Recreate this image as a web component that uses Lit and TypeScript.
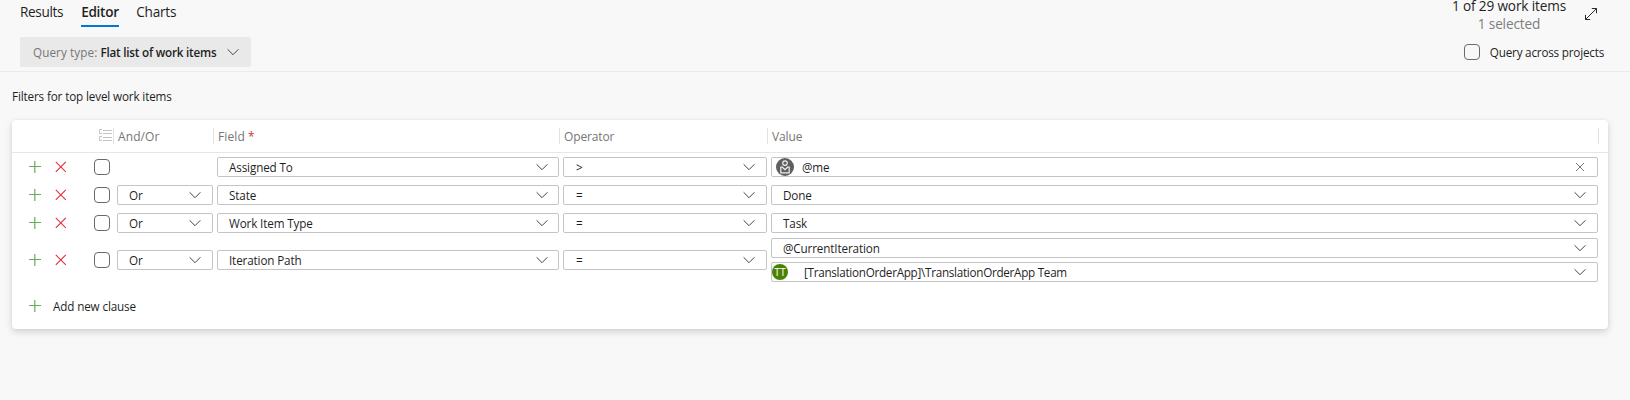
import { LitElement, html, css } from "lit";

const chevron = html`<svg class="chev" width="12" height="12" viewBox="0 0 12 12"><path d="M.6 3.3 6 8.7l5.4-5.4" /></svg>`;
const plus = html`<svg class="plus" width="12" height="12" viewBox="0 0 12 12"><path d="M5.8 0v12M0 5.5h12" /></svg>`;
const cross = html`<svg class="cross" width="12" height="12" viewBox="0 0 12 12"><path d="M.8.8l10 10M10.8.8l-10 10" /></svg>`;
const clearIcon = html`<svg class="clear" width="12" height="12" viewBox="0 0 12 12"><path d="M2 2l8 8M10 2l-8 8" /></svg>`;
const person = html`<svg class="person" width="18" height="18" viewBox="0 0 18 18">
  <circle cx="9" cy="9" r="9" fill="#5f5f5f" />
  <circle cx="9" cy="5.1" r="2.3" fill="none" stroke="#eee" stroke-width="1.2" />
  <path d="M4.8 9.2h1.6L9 11.6l2.6-2.4h1.6v5.6H4.8z" fill="none" stroke="#eee" stroke-width="1.2" />
</svg>`;

interface Value {
  text: string;
  kind?: "identity" | "team";
}

interface Clause {
  andOr?: string;
  field: string;
  op: string;
  values: Value[];
}

const clauses: Clause[] = [
  { field: "Assigned To", op: ">", values: [{ text: "@me", kind: "identity" }] },
  { andOr: "Or", field: "State", op: "=", values: [{ text: "Done" }] },
  { andOr: "Or", field: "Work Item Type", op: "=", values: [{ text: "Task" }] },
  {
    andOr: "Or",
    field: "Iteration Path",
    op: "=",
    values: [{ text: "@CurrentIteration" }, { text: "[TranslationOrderApp]\\TranslationOrderApp Team", kind: "team" }],
  },
];

class AppRoot extends LitElement {
  static styles = css`
    :host { display: block; height: 400px; overflow: hidden; background: #f8f8f8; color: #1f1f1f;
      font: 11.7px/20px "Open Sans", "Noto Sans", sans-serif; letter-spacing: -0.14px; }
    * { box-sizing: border-box; }
    svg { display: block; flex: none; fill: none; }
    .top { display: flex; justify-content: space-between; height: 72px; border-bottom: 1px solid #eaeaea; padding: 0 26px 0 20px; }
    .tabs { display: flex; gap: 18px; height: 27px; font-size: 13.6px; }
    .tab { height: 27px; line-height: 24px; border-bottom: 2px solid transparent; letter-spacing: -0.35px; }
    .tab.active { font-weight: 600; width: 38px; border-color: #0078d4; letter-spacing: -0.3px; }
    .tab.last { letter-spacing: -0.2px; margin-left: -1px; }
    .pill { display: flex; align-items: center; width: 231px; height: 30px; margin-top: 10px; padding: 0 12px 1px 13px; border-radius: 2px; background: #e9e9e9; }
    .pill .label { color: #767676; letter-spacing: 0.1px; margin-right: 3px; }
    .pill .val { font-weight: 600; flex: 1; letter-spacing: -0.22px; }
    .right { display: flex; flex-direction: column; align-items: flex-end; }
    .counts { display: flex; gap: 19px; height: 44px; padding-right: 7px; }
    .lines { text-align: center; font-size: 13.6px; line-height: 19px; }
    .lines .total { height: 15px; line-height: 11px; }
    .lines .sel { color: #7d7d7d; height: 19px; line-height: 18px; }
    .expand { margin-top: 8px; stroke: #2b2b2b; }
    .across { display: flex; align-items: center; gap: 10px; height: 16px; letter-spacing: -0.2px; }
    .box { width: 16px; height: 16px; flex: none; border: 1px solid #6a6a6a; border-radius: 4px; }
    .title { margin: 14px 0 14px 12px; }
    .card { margin: 0 22px 0 12px; height: 209px; border-radius: 4px; background: #fff;
      box-shadow: 0 3px 7px rgba(0, 0, 0, .15), 0 0 2px rgba(0, 0, 0, .08); }
    .row { display: grid; grid-template-columns: 101px 96px 342px 204px 827px; column-gap: 4px; align-items: center; }
    .head { display: grid; grid-template-columns: 102px 100px 346px 208px 831px; height: 33px; padding-top: 8px; border-bottom: 1px solid #e6e6e6; color: #767676; font-size: 12px; }
    .head > * { height: 16px; line-height: 17px; border-right: 1px solid #e2e2e2; padding-left: 4px; }
    .head .wide { letter-spacing: 0.1px; }
    .head .list { padding-left: 87px; padding-top: 1px; }
    .req { color: #d13438; }
    .rows { display: grid; gap: 8px; padding-top: 4px; }
    .row.multi { margin-top: -3px; }
    .lead { display: flex; align-items: center; padding-left: 17px; }
    .lead .cross { margin: 0 27px 0 14px; }
    .plus { stroke: #67ad5b; stroke-width: 1.2; }
    .cross { stroke: #e0303c; stroke-width: 1.1; }
    .chev { stroke: #444; }
    .clear { stroke: #666; stroke-width: .9; }
    .dd { display: flex; align-items: center; justify-content: space-between; height: 20px; padding: 0 10px 0 11px; border: 1px solid #c4c4c4; border-radius: 2px; line-height: 19px; }
    .dd span { padding-top: 1px; }
    .values .dd { padding-right: 11px; }
    .dd.op { padding: 0 11px 0 12px; }
    .andor { padding-right: 11px; }
    .values { display: grid; gap: 4px; }
    .values .identity { padding-left: 4px; justify-content: flex-start; gap: 8px; }
    .identity span, .team .name { flex: 1; }
    .values .team { padding-left: 0; justify-content: flex-start; }
    .team .name { letter-spacing: -0.28px; }
    .dd .avatar { padding: 0; width: 16px; height: 16px; margin-right: 16px; border-radius: 50%; background: #498205; color: #fff; font-size: 10.5px; line-height: 16px; text-align: center; }
    .add { display: flex; align-items: center; gap: 12px; padding-left: 17px; margin-top: 14px; }
  `;

  value(v: Value) {
    if (v.kind === "identity") return html`<div class="dd identity">${person}<span>${v.text}</span>${clearIcon}</div>`;
    if (v.kind === "team") return html`<div class="dd team"><span class="avatar">TT</span><span class="name">${v.text}</span>${chevron}</div>`;
    return html`<div class="dd"><span>${v.text}</span>${chevron}</div>`;
  }

  render() {
    return html`
      <div class="top">
        <div>
          <div class="tabs"><div class="tab">Results</div><div class="tab active">Editor</div><div class="tab last">Charts</div></div>
          <div class="pill"><span class="label">Query type:</span><span class="val">Flat list of work items</span>${chevron}</div>
        </div>
        <div class="right">
          <div class="counts">
            <div class="lines"><div class="total">1 of 29 work items</div><div class="sel">1 selected</div></div>
            <svg class="expand" width="12" height="12" viewBox="0 0 12 12"><path d="M.5 11.5l11-11M6.8.5h4.7v4.7M.5 6.8v4.7h4.7" /></svg>
          </div>
          <div class="across"><div class="box"></div><span>Query across projects</span></div>
        </div>
      </div>
      <div class="title">Filters for top level work items</div>
      <div class="card">
        <div class="head">
          <div class="list"><svg width="13" height="13" viewBox="0 0 13 13" stroke="#c4c4c4"><path d="M3 .5H.5v4H3M3 7.5H.5v4H3M4 1.5h9M4 4.5h9M4 8.5h9M4 11.5h9" /></svg></div>
          <div class="wide">And/Or</div>
          <div class="wide">Field <span class="req">*</span></div>
          <div>Operator</div>
          <div>Value</div>
        </div>
        <div class="rows">
          ${clauses.map((c) => html`<div class="row ${c.values.length > 1 ? "multi" : ""}">
            <div class="lead">${plus}${cross}<div class="box"></div></div>
            ${c.andOr ? html`<div class="dd andor"><span>${c.andOr}</span>${chevron}</div>` : html`<div></div>`}
            <div class="dd"><span>${c.field}</span>${chevron}</div>
            <div class="dd op"><span>${c.op}</span>${chevron}</div>
            <div class="values">${c.values.map((v) => this.value(v))}</div>
          </div>`)}
        </div>
        <div class="add">${plus}<span>Add new clause</span></div>
      </div>`;
  }
}
customElements.define("app-root", AppRoot);
